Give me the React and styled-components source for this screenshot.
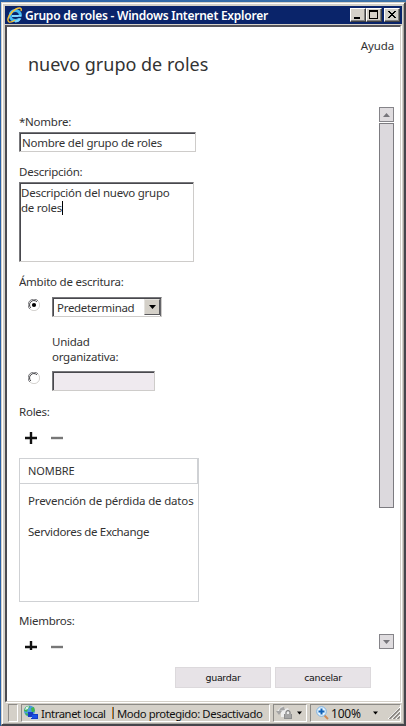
import React from "react";
import styled, { createGlobalStyle } from "styled-components";

const Global = createGlobalStyle`
  * { box-sizing: border-box; }
  html, body { margin: 0; padding: 0; overflow: hidden; }
  body {
    font-family: "Noto Sans", "Open Sans", sans-serif;
    font-size: 11.5px;
    letter-spacing: -0.24px;
    color: #333;
  }
  svg { display: block; flex: none; }
`;

const Desktop = styled.div`
  width: 406px;
  height: 726px;
  padding: 2px 0 0 1px;
  background: linear-gradient(90deg, #2a62a8, #3f73a8);
`;

const Window = styled.div`
  display: flex;
  flex-direction: column;
  width: 405px;
  height: 724px;
  padding: 2px 0 0 3px;
  background: #d4d0c8;
  border-style: solid;
  border-width: 1px 2px 2px 1px;
  border-color: #d4d0c8 #45454b #45454b #d4d0c8;
  box-shadow: inset 1px 1px #fff, inset -1px -1px #aaa7a2;
`;

const TitleBar = styled.header`
  display: flex;
  align-items: center;
  flex: none;
  width: 397px;
  height: 18px;
  margin-top: 1px;
  padding: 0 2px 0 2px;
  background: #0a246a;
`;

const Title = styled.h1`
  flex: 1;
  margin: 1px 0 0 2px;
  color: #fff;
  font: 600 12px/18px "Noto Sans", sans-serif;
  letter-spacing: -0.24px;
  white-space: nowrap;
`;

const CaptionButton = styled.button`
  display: block;
  width: 16px;
  height: 14px;
  margin: 0 0 0 ${(p) => p.$gap || 0}px;
  padding: 0;
  background: #d4d0c8;
  border: 1px solid;
  border-color: #fff #404040 #404040 #fff;
  box-shadow: inset -1px -1px #808080;
`;

const Client = styled.main`
  display: flex;
  flex-direction: column;
  flex: none;
  width: 396px;
  height: 677px;
  margin-top: 1px;
  background: #fff;
  border-style: solid;
  border-width: 2px 1px 1px 2px;
  border-color: #55545a #d4d0c8 #d4d0c8 #4b4b50;
  box-shadow: 1px 1px #fff;
`;

const PageHead = styled.div`
  flex: none;
  height: 80px;
  padding: 11px 6px 0 21px;
`;

const Help = styled.div`
  text-align: right;
  line-height: 16px;
  letter-spacing: -0.1px;
`;

const Heading = styled.h2`
  margin: -2px 0 0;
  font: 400 18px/24px "Noto Sans", sans-serif;
  letter-spacing: 0;
  white-space: nowrap;
`;

const Body = styled.div`
  display: flex;
  justify-content: space-between;
  flex: none;
  height: 543px;
  padding: 0 6px 0 12px;
`;

const Form = styled.div`
  width: 182px;
  height: 543px;
  overflow: hidden;
`;

const Label = styled.div`
  height: 16px;
  margin-top: ${(p) => p.$top}px;
  line-height: 16px;
  white-space: nowrap;
`;

const Field = styled.div`
  width: ${(p) => p.$width}px;
  height: ${(p) => p.$height}px;
  margin-top: ${(p) => p.$top || 0}px;
  padding: ${(p) => p.$pad || "0"};
  background: ${(p) => (p.$disabled ? "#efeaef" : "#fff")};
  border: 1px solid;
  border-color: #77777b #ceccca #ceccca #77777b;
  box-shadow: inset 1px 1px #48484d;
  line-height: ${(p) => p.$line || 15}px;
  white-space: nowrap;
`;

const Caret = styled.span`
  display: inline-block;
  width: 1px;
  height: 14px;
  vertical-align: -3px;
  background: #000;
`;

const Option = styled.div`
  display: flex;
  align-items: flex-start;
  margin-top: ${(p) => p.$top}px;
  padding-left: 9px;
`;

const Radio = styled.span`
  display: flex;
  width: 12px;
  margin: ${(p) => p.$top}px 12px 0 0;
`;

const Select = styled.div`
  display: flex;
  justify-content: space-between;
  width: 110px;
  height: 20px;
  padding: 1px 1px 1px 4px;
  border: 1px solid;
  border-color: #77777b #ceccca #ceccca #77777b;
  box-shadow: inset 1px 1px #48484d, inset -1px 0 #66666a;
  line-height: 18px;
  letter-spacing: -0.3px;
`;

const DropButton = styled.span`
  display: flex;
  align-items: center;
  justify-content: center;
  width: 16px;
  height: 16px;
  background: #d4d0c8;
  border: 1px solid;
  border-color: #e4e2de #58585c #58585c #e4e2de;
`;

const Hint = styled.div`
  margin: 17px 0 0 33px;
  line-height: 15px;
`;

const TextLine = styled.div`
  height: 15px;
`;

const Tools = styled.div`
  display: flex;
  gap: 14px;
  margin-top: ${(p) => p.$top}px;
  padding-left: 6px;
`;

const Table = styled.div`
  width: 180px;
  height: 144px;
  margin-top: 14px;
  border: 1px solid #cfd1d4;
`;

const TableHead = styled.div`
  height: 25px;
  padding-left: 8px;
  border-bottom: 1px solid #cfd1d4;
  border-right: 1px solid #cfd1d4;
  line-height: 24px;
  font-size: 11px;
  letter-spacing: -0.1px;
`;

const TableRow = styled.div`
  height: 31px;
  margin-top: ${(p) => p.$top || 0}px;
  padding-left: 8px;
  line-height: 30px;
  letter-spacing: ${(p) => p.$spacing}px;
  white-space: nowrap;
`;

const Scrollbar = styled.div`
  display: flex;
  flex-direction: column;
  width: 15px;
  height: 542px;
`;

const ScrollButton = styled.span`
  display: flex;
  align-items: center;
  justify-content: center;
  width: 15px;
  height: 15px;
  margin-top: ${(p) => (p.$end ? "auto" : "0")};
  background: #dfdcdf;
  border: 1px solid #858489;
`;

const Thumb = styled.span`
  height: 385px;
  margin-top: 1px;
  background: #dcd9dd;
  border: 1px solid #7c7b80;
`;

const Footer = styled.div`
  display: flex;
  justify-content: flex-end;
  gap: 4px;
  margin-top: 17px;
  padding-right: 29px;
`;

const Button = styled.button`
  width: 96px;
  height: 21px;
  padding: 0;
  background: #e7e3e7;
  border: 1px solid #dcd9dc;
  color: #111;
  font: 400 9.5px/17px "DejaVu Sans", sans-serif;
  letter-spacing: -0.35px;
`;

const StatusBar = styled.footer`
  display: flex;
  flex: none;
  width: 396px;
  height: 20px;
  margin-top: 1px;
  padding: 1px 0 0 3px;
  color: #111;
`;

const Pane = styled.div`
  display: flex;
  align-items: center;
  flex: none;
  width: ${(p) => p.$width}px;
  height: 18px;
  margin-right: 3px;
  padding-left: ${(p) => p.$pad || 0}px;
  border: 1px solid;
  border-color: #8c8a86 #fff #fff #8c8a86;
  white-space: nowrap;
`;

const StatusText = styled.span`
  width: ${(p) => p.$width}px;
  flex: none;
  margin-left: ${(p) => p.$left || 0}px;
  font-size: ${(p) => p.$size || 11.3}px;
  letter-spacing: ${(p) => (p.$size ? -0.2 : -0.42)}px;
`;

const Gap = styled.span`
  flex: none;
  width: ${(p) => p.$width}px;
`;

const Divider = styled.span`
  width: 2px;
  height: 12px;
  flex: none;
  margin-right: 3px;
  background: linear-gradient(90deg, #d07818 50%, #4a6c88 50%);
`;

const ExplorerIcon = () => (
  <svg width="16" height="16" viewBox="0 0 16 16" fill="none">
    <circle cx="8.3" cy="8.5" r="5.1" stroke="#42b9f2" strokeWidth="3" />
    <path d="M5 9h9M13 11.5c-1 2-3 3-5 3" stroke="#7ed6ff" strokeWidth="2" />
    <path d="M11 9.8h4v1.3h-4z" fill="#0a246a" />
    <path d="M2 15C-1 13 3 5 9 2c4-2 6-1 5 2M2 15c2 .5 4-.5 6-2" stroke="#f6bf35" strokeWidth="1.4" />
  </svg>
);

const CaptionIcon = ({ kind }) => (
  <svg width="14" height="12" viewBox="0 0 14 12" shapeRendering="crispEdges">
    {kind === "min" && <path d="M3 8h6v2H3z" />}
    {kind === "max" && <path fillRule="evenodd" d="M2 1h9v9H2zM3 3v6h7V3z" />}
    {kind === "close" && (
      <path d="M3 2h2v1h1v1h2V3h1V2h2v1h-1v1H9v1H8v1h1v1h1v1h1v1H9V8H8V7H6v1H5v1H3V8h1V7h1V6h1V5H5V4H4V3H3z" />
    )}
  </svg>
);

const Arrow = ({ up, color = "#000", width = 7 }) => (
  <svg width={width} height="4" viewBox="0 0 7 4">
    <path d={up ? "M0 4 3.5 0 7 4z" : "M0 0h7L3.5 4z"} fill={color} />
  </svg>
);

const RadioIcon = ({ checked }) => (
  <svg width="12" height="12" viewBox="0 0 12 12" fill="none">
    <path d="M1.8 10A5.2 5.2 0 0 1 10 1.8" stroke="#77777b" />
    <path d="M2.8 8.9A4.3 4.3 0 0 1 8.9 2.8" stroke="#38383c" />
    <path d="M2 10A5.3 5.3 0 0 0 10 2" stroke="#d4d2cf" />
    {checked && <circle cx="6" cy="6" r="2.1" fill="#000" />}
  </svg>
);

const AddIcon = () => (
  <svg width="12" height="12" viewBox="0 0 12 12" fill="#111">
    <path d="M4.8 0h2.4v4.8H12v2.4H7.2V12H4.8V7.2H0V4.8h4.8z" />
  </svg>
);

const RemoveIcon = () => (
  <svg width="12" height="12" viewBox="0 0 12 12" fill="#777">
    <path d="M0 4.8h12v2.4H0z" />
  </svg>
);

const NetworkIcon = () => (
  <svg width="16" height="16" viewBox="0 0 16 16">
    <circle cx="6.5" cy="6" r="5.5" fill="#4b9be0" />
    <path d="M2 3c2-3 5-2 5-1L5 4 4 7 1 6zM8 3l3-1 1 4-3 2zM2 8l4 1v2L3 10z" fill="#42b649" />
    <path d="M3 2 6 1 5 4 2 5z" fill="#d9f0ee" />
    <path d="M5 7h5v5H5zM8 9h7v5H8z" fill="#173bc5" />
    <path d="M9 10h5v3H9z" fill="#174fe8" />
    <path d="M5 12h4v1H5zM8 14h8v1H8z" fill="#c7d2dd" />
  </svg>
);

const LockIcon = () => (
  <svg width="17" height="16" viewBox="0 0 17 16" fill="none">
    <path d="M1 6 6 1l3 3 3-1 2 4-3 5H5V6z" fill="#eee" />
    <path d="M0 6h6L3 10zM3 6q1-4 5-4l1 3" fill="#a4a4a4" />
    <path d="M10 9V7q2-3 4 0v2" stroke="#858585" strokeWidth="1.3" />
    <path d="M8 9h8v5H8z" fill="#8d8d8d" />
    <path d="M9 10h6M9 12h6" stroke="#bbb" />
  </svg>
);

const ZoomIcon = () => (
  <svg width="13" height="14" viewBox="0 0 13 14" fill="none">
    <path d="m8 9 4 4" stroke="#d18b55" strokeWidth="2" />
    <circle cx="5.5" cy="5.5" r="4.8" fill="#e5f5ff" stroke="#7cb2e4" />
    <path d="M5.5 2.5v6M2.5 5.5h6" stroke="#1262b8" strokeWidth="2" />
  </svg>
);

const Grip = () => (
  <svg width="12" height="12" viewBox="0 0 12 12" fill="none">
    <path d="M0 12 12 0M4 12l8-8M8 12l4-4" stroke="#fff" />
    <path d="M1.5 12 12 1.5M5.5 12 12 5.5M9.5 12 12 9.5" stroke="#85827d" strokeWidth="1.5" />
  </svg>
);

const ListTools = ({ top }) => (
  <Tools $top={top}>
    <AddIcon />
    <RemoveIcon />
  </Tools>
);

export default function App() {
  return (
    <Desktop>
      <Global />
      <Window>
        <TitleBar>
          <ExplorerIcon />
          <Title>Grupo de roles - Windows Internet Explorer</Title>
          <CaptionButton><CaptionIcon kind="min" /></CaptionButton>
          <CaptionButton><CaptionIcon kind="max" /></CaptionButton>
          <CaptionButton $gap={2}><CaptionIcon kind="close" /></CaptionButton>
        </TitleBar>
        <Client>
          <PageHead>
            <Help>Ayuda</Help>
            <Heading>nuevo grupo de roles</Heading>
          </PageHead>
          <Body>
            <Form>
              <Label $top={7}>*Nombre:</Label>
              <Field $top={2} $width={177} $height={20} $pad="1px 0 0 2px" $line={18}>Nombre del grupo de roles</Field>
              <Label $top={12}>Descripción:</Label>
              <Field $top={2} $width={175} $height={80} $pad="2px 0 0 1px">
                <TextLine>Descripción del nuevo grupo</TextLine>
                <TextLine>de roles<Caret /></TextLine>
              </Field>
              <Label $top={12}>Ámbito de escritura:</Label>
              <Option $top={7}>
                <Radio $top={2}><RadioIcon checked /></Radio>
                <Select>Predeterminad<DropButton><Arrow /></DropButton></Select>
              </Option>
              <Hint>
                <TextLine>Unidad</TextLine>
                <TextLine>organizativa:</TextLine>
              </Hint>
              <Option $top={7}>
                <Radio $top={1}><RadioIcon /></Radio>
                <Field $width={103} $height={20} $disabled />
              </Option>
              <Label $top={13}>Roles:</Label>
              <ListTools top={12} />
              <Table>
                <TableHead>NOMBRE</TableHead>
                <TableRow $top={2} $spacing={-0.17}>Prevención de pérdida de datos</TableRow>
                <TableRow $spacing={-0.33}>Servidores de Exchange</TableRow>
              </Table>
              <Label $top={11}>Miembros:</Label>
              <ListTools top={12} />
            </Form>
            <Scrollbar>
              <ScrollButton><Arrow up color="#77767b" /></ScrollButton>
              <Thumb />
              <ScrollButton $end><Arrow color="#77767b" /></ScrollButton>
            </Scrollbar>
          </Body>
          <Footer>
            <Button>guardar</Button>
            <Button>cancelar</Button>
          </Footer>
        </Client>
        <StatusBar>
          <Pane $width={10} />
          <Pane $width={249} $pad={1}>
            <NetworkIcon />
            <StatusText $width={71} $left={2}>Intranet local</StatusText>
            <Divider />
            <StatusText $width={149}>Modo protegido: Desactivado</StatusText>
          </Pane>
          <Pane $width={34} $pad={2}>
            <LockIcon />
            <Gap $width={4} />
            <Arrow width={5} />
          </Pane>
          <Pane $width={91} $pad={5}>
            <ZoomIcon />
            <StatusText $width={42} $left={2} $size={12}>100%</StatusText>
            <Arrow width={5} />
            <Gap $width={10} />
            <Grip />
          </Pane>
        </StatusBar>
      </Window>
    </Desktop>
  );
}
